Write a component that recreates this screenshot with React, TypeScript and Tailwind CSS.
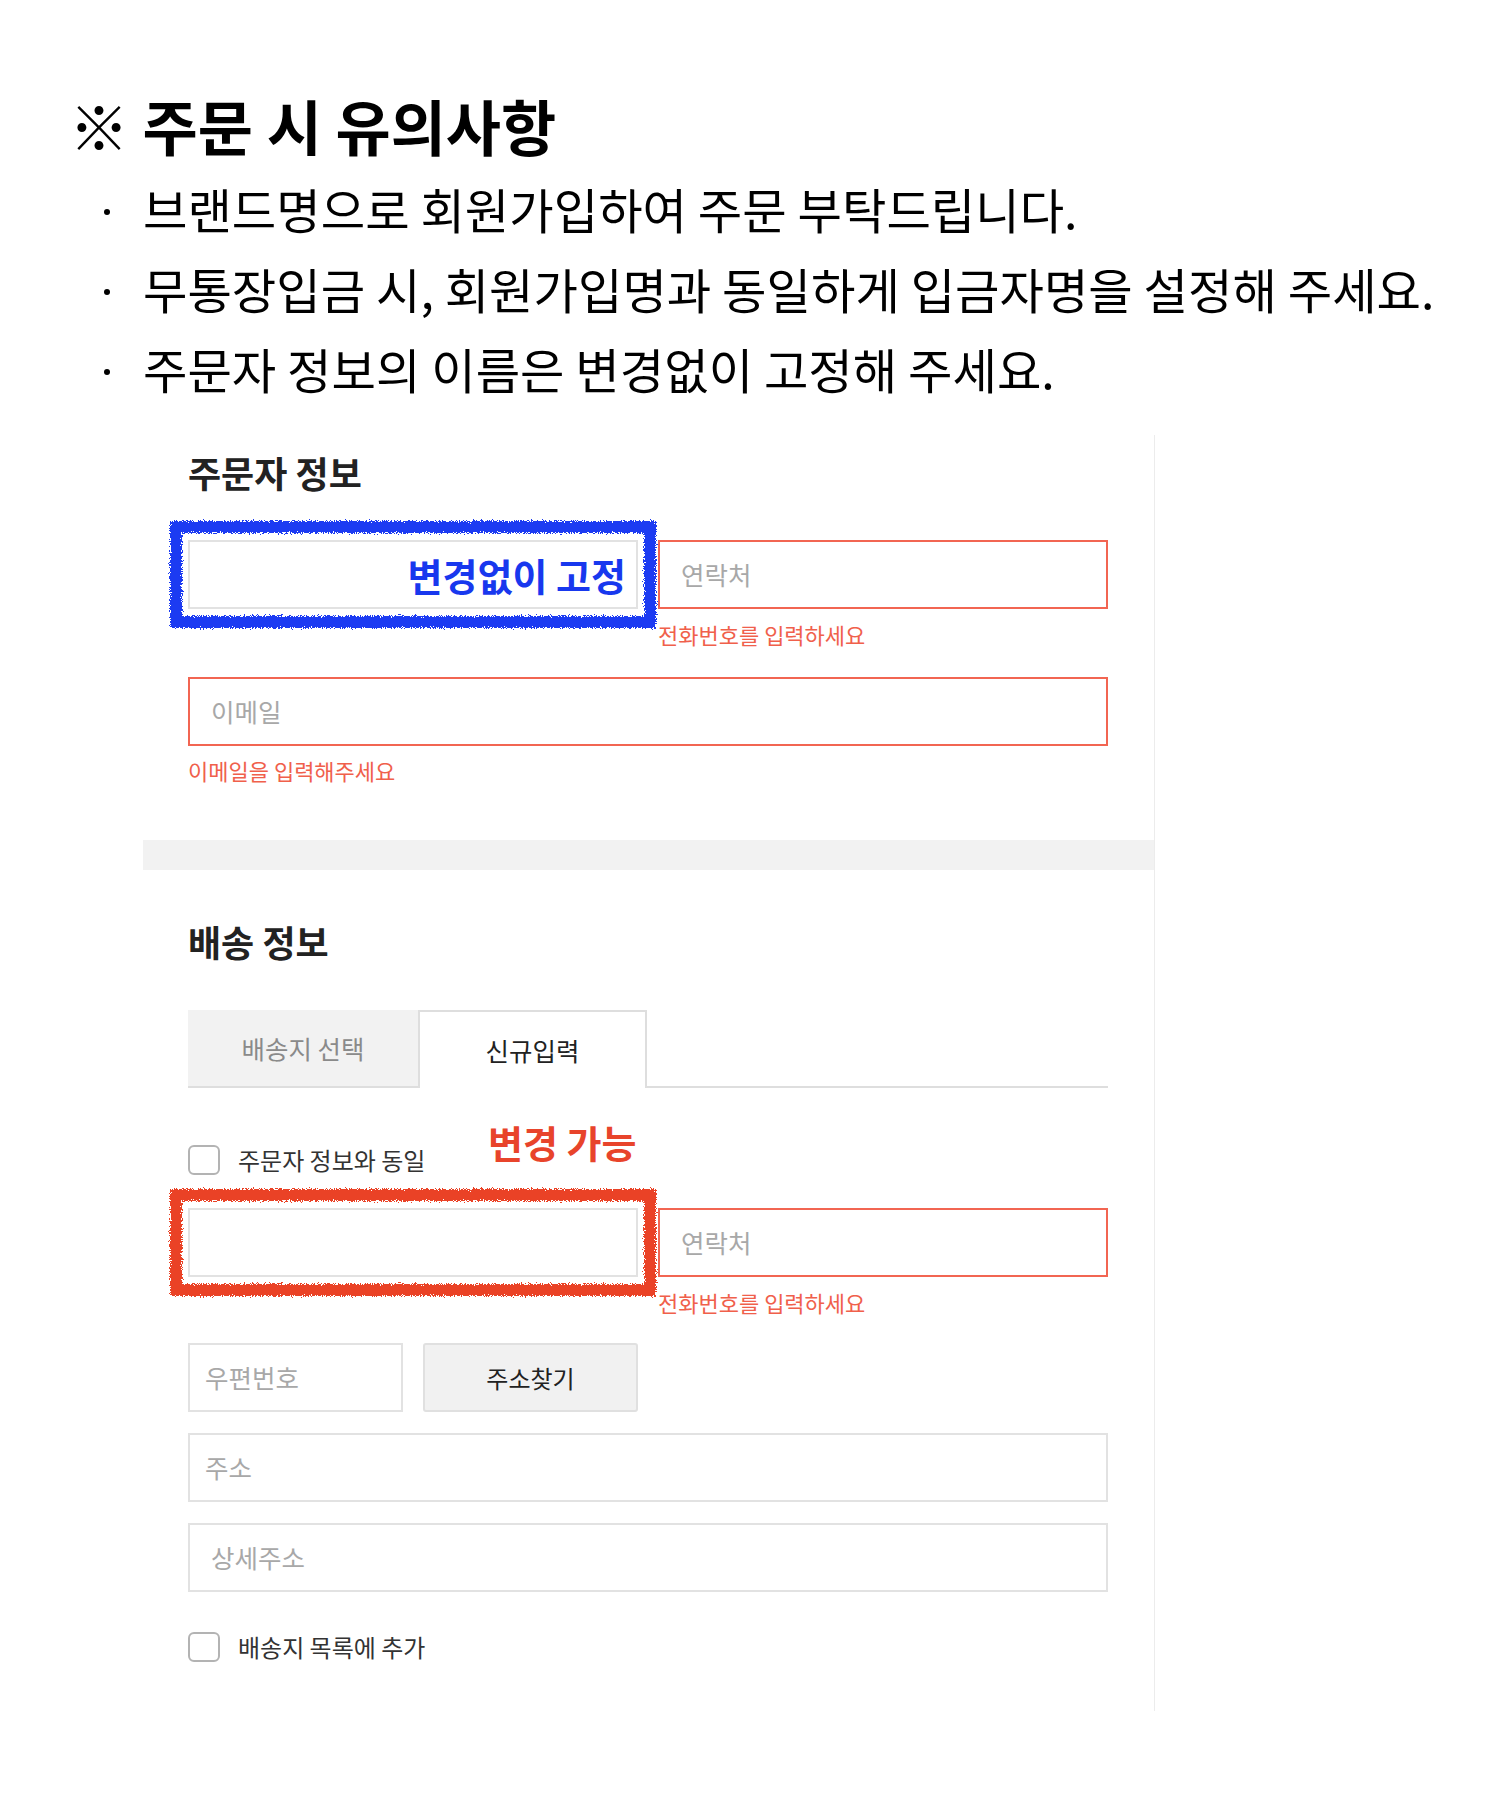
import React from "react";

const notices = [
  "브랜드명으로 회원가입하여 주문 부탁드립니다.",
  "무통장입금 시, 회원가입명과 동일하게 입금자명을 설정해 주세요.",
  "주문자 정보의 이름은 변경없이 고정해 주세요.",
];

const Scribble = ({ color }: { color: string }) => (
  <svg
    className="pointer-events-none absolute -left-[22px] -top-[23px] overflow-visible"
    width="490"
    height="111"
  >
    <rect
      x="8"
      y="8"
      width="474"
      height="95"
      fill="none"
      stroke={color}
      strokeWidth="12"
      filter="url(#rough)"
    />
  </svg>
);

const Checkbox = ({ label }: { label: string }) => (
  <label className="flex h-[30px] items-center gap-[18px]">
    <span className="h-[30px] w-[32px] rounded-[6px] border-2 border-[#b3b3b3] bg-white" />
    <span className="text-[24px] leading-none text-[#333]">{label}</span>
  </label>
);

const TextBox = ({
  placeholder,
  error,
  className = "",
}: {
  placeholder: string;
  error?: boolean;
  className?: string;
}) => (
  <div
    className={`flex h-[69px] items-center border-2 px-[21px] text-[25.5px] text-[#a8a8a8] ${
      error ? "border-[#f26552]" : "border-[#e2e2e2]"
    } ${className}`}
  >
    {placeholder}
  </div>
);

const ErrorText = ({ children }: { children: React.ReactNode }) => (
  <p className="mt-[12px] text-[22px] leading-[26px] text-[#f0604b]">{children}</p>
);

const NameRow = ({ fixed }: { fixed?: boolean }) => (
  <div className="flex gap-[20px]">
    <div className="relative flex h-[69px] w-[450px] items-center justify-end border-2 border-[#e2e2e2] pr-[10px]">
      {fixed && (
        <span className="text-[38px] font-bold leading-none text-[#1838ee]">변경없이 고정</span>
      )}
      <Scribble color={fixed ? "#1a3af2" : "#ea4326"} />
    </div>
    <div className="w-[450px]">
      <TextBox placeholder="연락처" error />
      <ErrorText>전화번호를 입력하세요</ErrorText>
    </div>
  </div>
);

export default function App() {
  return (
    <div className="min-h-[1800px] bg-white font-['Noto_Sans_CJK_KR','Noto_Sans',sans-serif] text-black">
      <svg width="0" height="0" className="absolute">
        <filter id="rough" x="-10%" y="-20%" width="120%" height="140%">
          <feTurbulence type="fractalNoise" baseFrequency="0.9" numOctaves="2" seed="3" />
          <feDisplacementMap in="SourceGraphic" scale="7" />
        </filter>
      </svg>

      <div className="pl-[69px] pt-[90px]">
        <h1 className="text-[60px] font-bold leading-[70px]">
          <span className="font-black">※</span> 주문 시 유의사항
        </h1>
      </div>

      <ul className="mt-[8px]">
        {notices.map((t) => (
          <li key={t} className="flex h-[80px] items-center pl-[104px]">
            <span className="mt-[8px] h-[6px] w-[6px] rounded-full bg-black" />
            <span className="ml-[33px] text-[48.3px] leading-[80px]">{t}</span>
          </li>
        ))}
      </ul>

      <div className="ml-[143px] mt-[27px] flex w-[1012px] flex-col border-r border-[#ececec]">
        <section className="pb-[57px] pl-[45px] pr-[46px] pt-[15px]">
          <h2 className="text-[36px] font-bold leading-[44px] text-[#222]">주문자 정보</h2>
          <div className="mt-[46px]">
            <NameRow fixed />
          </div>
          <TextBox placeholder="이메일" error className="mt-[30px]" />
          <p className="mt-[11px] text-[22px] leading-[26px] text-[#f0604b]">이메일을 입력해주세요</p>
        </section>

        <div className="h-[30px] bg-[#f2f2f2]" />

        <section className="pb-[49px] pl-[45px] pr-[46px] pt-[49px]">
          <h2 className="text-[36px] font-bold leading-[44px] text-[#222]">배송 정보</h2>

          <div className="mt-[47px] flex h-[78px]">
            <div className="flex w-[230px] items-center justify-center border-b-2 border-[#dedede] bg-[#f2f2f2] text-[25.5px] text-[#8a8a8a]">
              배송지 선택
            </div>
            <div className="flex w-[229px] items-center justify-center border-x-2 border-t-2 border-[#dedede] bg-white text-[25.5px] text-[#222]">
              신규입력
            </div>
            <div className="flex-1 border-b-2 border-[#dedede]" />
          </div>

          <div className="relative mt-[57px]">
            <Checkbox label="주문자 정보와 동일" />
            <span className="absolute left-[300px] top-[-27px] text-[38px] font-bold leading-[48px] text-[#e8442b]">
              변경 가능
            </span>
          </div>

          <div className="mt-[33px]">
            <NameRow />
          </div>

          <div className="mt-[28px] flex gap-[20px]">
            <TextBox placeholder="우편번호" className="w-[215px] !px-[15px]" />
            <button className="h-[69px] w-[215px] rounded-[3px] border-2 border-[#e0e0e0] bg-[#f1f1f1] text-[24px] text-[#222]">
              주소찾기
            </button>
          </div>
          <TextBox placeholder="주소" className="mt-[21px] !px-[15px]" />
          <TextBox placeholder="상세주소" className="mt-[21px]" />

          <div className="mt-[40px]">
            <Checkbox label="배송지 목록에 추가" />
          </div>
        </section>
      </div>
    </div>
  );
}
